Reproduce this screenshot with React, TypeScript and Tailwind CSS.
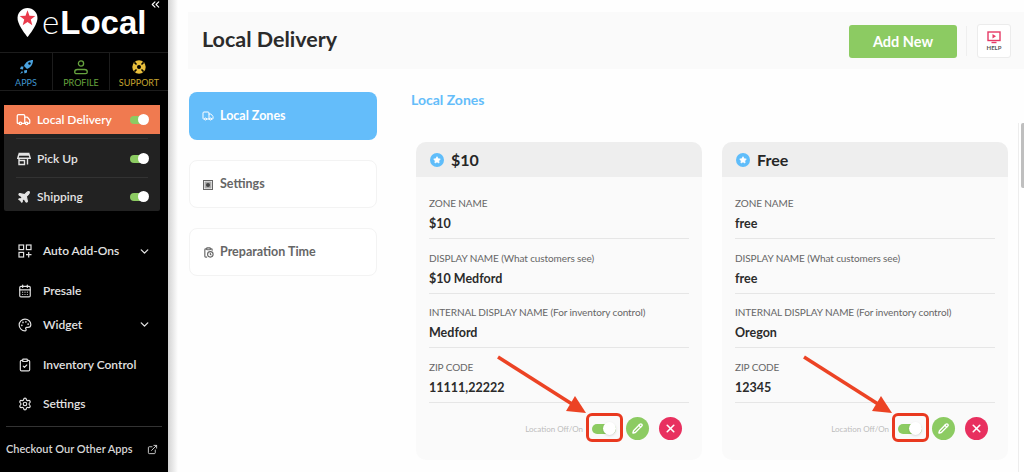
import React from "react";
import { Truck, Plane, CalendarDays, Palette, ClipboardCheck, Settings, ChevronDown, ExternalLink, Pencil, X, ChevronsLeft, ClipboardClock, Star } from "lucide-react";

const font = { fontFamily: "Lato, 'Noto Sans', sans-serif" };

function Toggle() {
  return (
    <div className="relative ml-auto h-[8px] w-[18px] rounded-full bg-[#8ccb62]">
      <div className="absolute right-[-1px] top-[-2px] h-[11px] w-[11px] rounded-full bg-white" />
    </div>
  );
}

function NavRow({ icon, label, active, line }: { icon: React.ReactNode; label: string; active?: boolean; line?: boolean }) {
  if (active) {
    return (
      <div className="flex h-[29px] items-center gap-[6px] bg-[#f07a50] px-[12px]">
        {icon}
        <span className="text-[12px] font-semibold text-white">{label}</span>
        <Toggle />
      </div>
    );
  }
  return (
    <div className="px-[12px]">
      <div className={`flex items-center gap-[6px] pl-[1px] ${line ? "h-[40px] border-t border-b border-[#333] pt-[2px]" : "h-[33px] pt-[5px]"}`}>
        {icon}
        <span className="text-[12px] font-semibold text-[#e4e4e4]">{label}</span>
        <Toggle />
      </div>
    </div>
  );
}

function SideItem({ icon, label, chevron, className }: { icon: React.ReactNode; label: string; chevron?: boolean; className: string }) {
  return (
    <div className={`flex items-center gap-[11px] pl-[18px] pr-[17px] ${className}`}>
      {icon}
      <span className="text-[12px] font-semibold text-[#e2e2e2]">{label}</span>
      {chevron && <ChevronDown size={13} strokeWidth={2.5} className="ml-auto text-[#e2e2e2]" />}
    </div>
  );
}

function Field({ label, value, note }: { label: string; value: string; note?: string }) {
  return (
    <div className="h-[54.67px] border-b border-[#e6e6e6] pt-[11.67px]">
      <div className="text-[10px] leading-[14px] tracking-[-0.1px] text-[#666]">
        {label}
        {note && <span> {note}</span>}
      </div>
      <div className="mt-[6px] text-[12.5px] font-bold leading-[16px] text-[#2b2b2b]">{value}</div>
    </div>
  );
}

function Card({ title, zone, display, internal, zip }: { title: string; zone: string; display: string; internal: string; zip: string }) {
  return (
    <div className="relative h-[318px] w-[286px] overflow-hidden rounded-[10px] bg-[#fafafa]">
      <div className="flex h-[35px] items-center gap-[7px] bg-[#eeeeee] pl-[14px]">
        <div className="flex h-[14px] w-[14px] items-center justify-center rounded-full bg-[#5fbdfa]">
          <Star size={8} fill="white" stroke="white" />
        </div>
        <span className="text-[16px] font-bold text-[#262626]">{title}</span>
      </div>
      <div className="px-[13px] pt-[7.33px]">
        <Field label="ZONE NAME" value={zone} />
        <Field label="DISPLAY NAME" note="(What customers see)" value={display} />
        <Field label="INTERNAL DISPLAY NAME" note="(For inventory control)" value={internal} />
        <Field label="ZIP CODE" value={zip} />
        <div className="flex h-[52px] items-center justify-end pr-[7px]">
          <span className="mr-[9px] text-[8px] text-[#bdbdbd]">Location Off/On</span>
          <div className="relative mr-[10px] h-[10px] w-[24px] rounded-full bg-[#8ccb62]">
            <div className="absolute right-0 top-[-2px] h-[13px] w-[13px] rounded-full bg-white shadow-sm" />
          </div>
          <div className="flex h-[23px] w-[23px] items-center justify-center rounded-full bg-[#8ccb62]">
            <Pencil size={11} strokeWidth={3} className="text-white" />
          </div>
          <div className="ml-[10px] flex h-[23px] w-[23px] items-center justify-center rounded-full bg-[#e8305f]">
            <X size={13} strokeWidth={3} className="text-white" />
          </div>
        </div>
      </div>
      <div className="absolute left-[170px] top-[271px] h-[29px] w-[37px] rounded-[6px] border-[3px] border-[#e9391f]" />
      <svg className="absolute left-[78px] top-[213px]" width="100" height="62" viewBox="0 0 100 62">
        <line x1="4" y1="2" x2="78" y2="49" stroke="#ec4324" strokeWidth="3.5" />
        <polygon points="92,58 81,41 72,56" fill="#ec4324" />
      </svg>
    </div>
  );
}

function Tab({ icon, label, active }: { icon: React.ReactNode; label: string; active?: boolean }) {
  return (
    <div className={`flex h-[48px] items-center gap-[6px] rounded-[8px] text-[12.5px] font-bold ${active ? "bg-[#64bdfa] pl-[13px] text-white" : "border border-[#f3f3f3] bg-white pl-[12px] pt-[1px] text-[#666]"}`}>
      <span className="flex w-[12px] justify-center">{icon}</span>
      <span>{label}</span>
    </div>
  );
}

export default function App() {
  return (
    <div style={font} className="flex h-[472px] w-[1024px] overflow-hidden bg-white">
      <aside className="flex h-full w-[168px] shrink-0 flex-col bg-black">
        <div className="relative flex h-[52px] items-start pl-[17px] pt-[8px]">
          <svg width="21" height="29" viewBox="0 0 22 32" className="shrink-0">
            <path d="M11 0C4.9 0 0 4.9 0 11c0 8 11 21 11 21s11-13 11-21C22 4.9 17.1 0 11 0z" fill="#fff" />
            <polygon points="11,2.5 13.2,8.6 19.6,8.8 14.6,12.8 16.3,19 11,15.4 5.7,19 7.4,12.8 2.4,8.8 8.8,8.6" fill="#ea3a4b" />
          </svg>
          <span className="ml-[4px] mt-[-6px] whitespace-nowrap text-[33px] leading-[38px] text-white">
            <span className="font-light">e</span>
            <span className="ml-[1px] font-bold" style={{ fontFamily: "'Liberation Sans', sans-serif" }}>Local</span>
          </span>
          <ChevronsLeft size={13} strokeWidth={2} className="absolute right-[6px] top-[-2px] text-white" />
        </div>
        <div className="flex h-[39px] border-y border-[#1c1c1c]">
          <div className="flex w-[53px] flex-col items-center justify-end border-r border-[#1c1c1c] pb-[1px] text-[#3f93cc]">
            <svg width="15" height="16" viewBox="0 0 15 16">
              <path d="M14 1C10 1 6.5 3 5 7l3 3c4-1.5 6-5 6-9z" fill="#4aa3e0" />
              <path d="M4.5 7.5H2L1 10l3 .5zM8 11v2.5l-2.5 1L5 11.5z" fill="#4aa3e0" />
              <path d="M3 12l-2 3 3-1.5z" fill="#4aa3e0" />
              <circle cx="10.5" cy="4.5" r="1.2" fill="#000" />
            </svg>
            <span className="mt-[1px] text-[9px] leading-[13px]">APPS</span>
          </div>
          <div className="flex w-[57px] flex-col items-center justify-end border-r border-[#1c1c1c] pb-[1px] text-[#66a33e]">
            <svg width="14" height="15" viewBox="0 0 14 15" fill="none" stroke="#66a33e" strokeWidth="1.3">
              <circle cx="7" cy="3.5" r="2.6" />
              <path d="M3.5 9.5h7c1.6 0 2.8 1.2 2.8 2.4 0 1-.7 1.8-1.8 1.8h-9c-1.1 0-1.8-.8-1.8-1.8 0-1.2 1.2-2.4 2.8-2.4z" />
            </svg>
            <span className="mt-[1px] text-[9px] leading-[13px]">PROFILE</span>
          </div>
          <div className="flex flex-1 flex-col items-center justify-end pb-[1px] text-[#c5a42f]">
            <svg width="14" height="14" viewBox="0 0 14 14" className="mb-[1px]">
              <circle cx="7" cy="7" r="6.7" fill="#e9bf3c" />
              <circle cx="7" cy="7" r="2" fill="#000" />
              <path d="M7 .5V3.5M7 10.5v3M.5 7h3M10.5 7h3" stroke="#000" strokeWidth="1.5" transform="rotate(45 7 7)" />
            </svg>
            <span className="mt-[1px] text-[9px] leading-[13px]">SUPPORT</span>
          </div>
        </div>
        <div className="mx-[4px] mt-[14px] h-[106px] w-[156px] rounded-[2px] bg-[#222]">
          <NavRow active icon={<Truck size={15} className="text-white" />} label="Local Delivery" />
          <div className="h-[4px]" />
          <NavRow line icon={
            <svg width="14" height="14" viewBox="0 0 14 14" fill="none" stroke="#e4e4e4" strokeWidth="1.4">
              <path d="M1.5 1.5h11M.8 6.2l.9-3.2h10.6l.9 3.2zM2 6.5v6h5.5v-4H2M10.5 6.5v6" />
            </svg>
          } label="Pick Up" />
          <NavRow icon={<Plane size={14} fill="#e4e4e4" className="text-[#e4e4e4]" />} label="Shipping" />
        </div>
        <SideItem className="mt-[20px] h-[40px]" chevron label="Auto Add-Ons" icon={
          <svg width="14" height="14" viewBox="0 0 14 14" fill="none" stroke="#e2e2e2" strokeWidth="1.2">
            <rect x="1" y="1" width="4.6" height="4.6" />
            <rect x="8.4" y="1" width="4.6" height="4.6" />
            <rect x="1" y="8.4" width="4.6" height="4.6" />
            <path d="M10.7 8v5.5M8 10.7h5.5" />
          </svg>
        } />
        <SideItem className="h-[40px]" icon={<CalendarDays size={14} className="text-[#e2e2e2]" />} label="Presale" />
        <SideItem className="h-[27px]" chevron icon={<Palette size={14} className="text-[#e2e2e2]" />} label="Widget" />
        <SideItem className="h-[54px]" icon={<ClipboardCheck size={14} className="text-[#e2e2e2]" />} label="Inventory Control" />
        <SideItem className="h-[23px]" icon={<Settings size={14} className="text-[#e2e2e2]" />} label="Settings" />
        <div className="mx-[6px] mt-[11px] flex items-center justify-between border-t border-[#333] pr-[4px] pt-[14px] text-[11px] font-semibold text-[#d6d6d6]">
          <span>Checkout Our Other Apps</span>
          <ExternalLink size={11} />
        </div>
      </aside>

      <main className="relative flex-1 bg-[#fefefe] pl-[20px] pt-[12px]">
        <div className="absolute inset-y-0 left-0 w-[10px] bg-gradient-to-r from-[#d4d4d4] to-[#fefefe]" />
        <header className="flex h-[57px] items-center bg-[#fafafa] pl-[14px]">
          <h1 className="mb-[2px] text-[21.5px] font-bold text-[#2b2b2b]">Local Delivery</h1>
          <button className="ml-auto mr-[9px] mt-[1px] h-[33px] w-[108px] rounded-[3px] bg-[#8ccb62] pt-[2px] text-[14.5px] font-bold text-white">Add New</button>
          <div className="h-[30px] w-px bg-[#efefef]" />
          <div className="ml-[10px] mr-[13px] mt-[1px] flex h-[34px] w-[34px] flex-col items-center justify-center rounded-[3px] border border-[#ececec] bg-white">
            <svg width="14" height="13" viewBox="0 0 14 13">
              <rect x="1" y="1" width="12" height="8.5" fill="none" stroke="#e63a66" strokeWidth="1.4" />
              <polygon points="5.5,3 9,5.2 5.5,7.4" fill="#e63a66" />
              <path d="M4.5 11.5h5" stroke="#e63a66" strokeWidth="1.4" />
            </svg>
            <span className="text-[6px] font-bold leading-[8px] text-[#555]">HELP</span>
          </div>
        </header>
        <div className="ml-[1px] mt-[23px] flex">
          <nav className="flex w-[188px] shrink-0 flex-col gap-[20px]">
            <Tab active icon={<Truck size={12} />} label="Local Zones" />
            <Tab label="Settings" icon={
              <svg width="10" height="10" viewBox="0 0 10 10">
                <rect x="0.5" y="0.5" width="9" height="9" fill="none" stroke="#666" />
                <rect x="1.5" y="1.5" width="7" height="7" fill="#aaa" />
                <circle cx="5" cy="5" r="2" fill="#444" />
              </svg>
            } />
            <Tab icon={<ClipboardClock size={11} strokeWidth={2.5} />} label="Preparation Time" />
          </nav>
          <section className="ml-[34px] flex-1">
            <h2 className="text-[14px] font-bold leading-[16px] text-[#64bdfa]">Local Zones</h2>
            <div className="ml-[5px] mt-[34px] flex gap-[20px]">
              <Card title="$10" zone="$10" display="$10 Medford" internal="Medford" zip="11111,22222" />
              <Card title="Free" zone="free" display="free" internal="Oregon" zip="12345" />
            </div>
          </section>
        </div>
        <div className="absolute bottom-0 right-0 top-[123px] w-[6px] border-l border-[#ededed] bg-white">
          <div className="ml-auto h-[65px] w-[3px] rounded-l-[2px] bg-[#bfbfbf]" />
        </div>
      </main>
    </div>
  );
}
